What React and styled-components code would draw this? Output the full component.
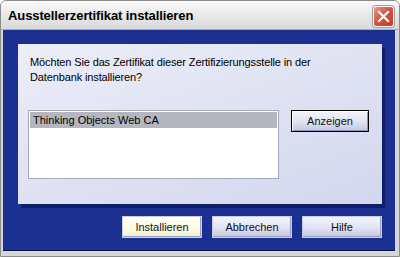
import styled, { createGlobalStyle } from "styled-components";

const Global = createGlobalStyle`
    html, body { margin: 0; padding: 0; background: #ffffff; }
    body { font-family: "Liberation Sans", Arial, sans-serif; }
`;

const Window = styled.div`
    width: 400px;
    height: 257px;
    box-sizing: border-box;
    display: flex;
    flex-direction: column;
    background: #d6d6d6;
    border: 1px solid #8c8c8c;
    border-radius: 6px 6px 0 0;
    overflow: hidden;
`;

const TitleBar = styled.div`
    height: 28px;
    flex: none;
    display: flex;
    align-items: center;
    justify-content: space-between;
    padding: 0 5px 0 7px;
    background: linear-gradient(#fbfbfb 0%, #ececec 40%, #d9d9d9 100%);
`;

const Title = styled.div`
    font-family: "Liberation Sans", Arial, sans-serif;
    font-weight: bold;
    font-size: 13px;
    letter-spacing: -0.1px;
    color: #000;
    margin-top: 1px;
`;

const CloseButton = styled.div`
    width: 19px;
    height: 19px;
    border: 1px solid #ffffff;
    border-radius: 3px;
    background: linear-gradient(135deg, #ec9a8a 0%, #d8563f 45%, #c43a26 100%);
    box-shadow: 0 0 0 1px #9c9c9c;
    display: flex;
    align-items: center;
    justify-content: center;
    margin-top: 2px;
`;

const Frame = styled.div`
    flex: 1;
    display: flex;
    padding: 0 4px 5px 2px;
    border-top: 1px solid #a8a8a8;
`;

const Body = styled.div`
    flex: 1;
    display: flex;
    flex-direction: column;
    align-items: flex-end;
    padding: 14px 13px 0 15px;
    background: repeating-linear-gradient(
        #1e3393 0px,
        #1e3393 1px,
        #192b8b 1px,
        #192b8b 2px
    );
    border-bottom: 1px solid #0c1450;
`;

const Panel = styled.div`
    width: 364px;
    height: 160px;
    box-sizing: border-box;
    padding: 11px 12px 0 10px;
    background: linear-gradient(160deg, #eceef8 0%, #dfe2f2 50%, #d3d7ee 100%);
    box-shadow: 3px 4px 0 #101e6a;
    display: flex;
    flex-direction: column;
`;

const Message = styled.p`
    margin: 0 0 0 2px;
    font-size: 11px;
    line-height: 15px;
    letter-spacing: -0.13px;
    color: #000;
    height: 55px;
`;

const ListRow = styled.div`
    display: flex;
    gap: 12px;
    align-items: flex-start;
`;

const ListBox = styled.div`
    width: 251px;
    height: 69px;
    box-sizing: border-box;
    border: 1px solid #a5a9bd;
    background: #ffffff;
    padding: 1px;
`;

const ListItem = styled.div`
    height: 16px;
    line-height: 16px;
    padding-left: 3px;
    font-size: 11px;
    color: #000;
    background: ${(p) => (p.$selected ? "#b6b6bf" : "transparent")};
`;

const Button = styled.div`
    width: ${(p) => p.$w || 80}px;
    height: 22px;
    box-sizing: border-box;
    display: flex;
    align-items: center;
    justify-content: center;
    font-size: 11px;
    color: #111;
    border: 1px solid ${(p) => (p.$default ? "#000000" : "#c8cce0")};
    background: ${(p) =>
        p.$cream
            ? "linear-gradient(#fffff4 0%, #fbfbe4 60%, #eeeecc 100%)"
            : "linear-gradient(#f4f5fb 0%, #dfe2f1 55%, #c3c7e0 100%)"};
    box-shadow: ${(p) =>
        p.$default
            ? "inset 1px 1px 0 #ffffff, inset -1px -1px 0 #8e93b4"
            : "inset -1px -1px 0 #9ea3c2"};
`;

const ButtonRow = styled.div`
    display: flex;
    gap: 10px;
    margin-top: 12px;
`;

export default function App() {
    return (
        <>
            <Global />
            <Window>
                <TitleBar>
                    <Title>Ausstellerzertifikat installieren</Title>
                    <CloseButton>
                        <svg width="13" height="13" viewBox="0 0 13 13">
                            <path
                                d="M2 2 L11 11 M11 2 L2 11"
                                stroke="#ffffff"
                                strokeWidth="2.2"
                                strokeLinecap="square"
                            />
                        </svg>
                    </CloseButton>
                </TitleBar>
                <Frame>
                    <Body>
                        <Panel>
                            <Message>
                                Möchten Sie das Zertifikat dieser Zertifizierungsstelle in der
                                <br />
                                Datenbank installieren?
                            </Message>
                            <ListRow>
                                <ListBox>
                                    <ListItem $selected>Thinking Objects Web CA</ListItem>
                                </ListBox>
                                <Button $w={78} $default>Anzeigen</Button>
                            </ListRow>
                        </Panel>
                        <ButtonRow>
                            <Button $cream>Installieren</Button>
                            <Button>Abbrechen</Button>
                            <Button>Hilfe</Button>
                        </ButtonRow>
                    </Body>
                </Frame>
            </Window>
        </>
    );
}
